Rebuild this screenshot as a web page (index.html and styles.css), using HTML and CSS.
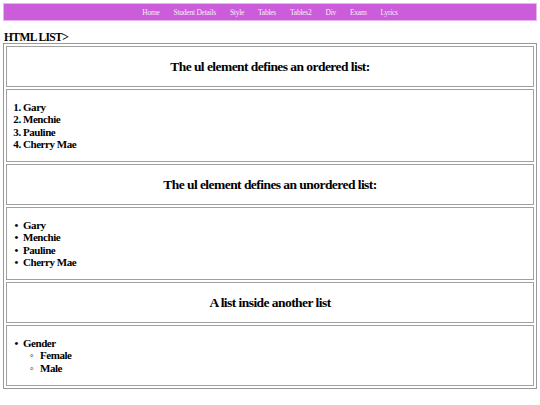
FILE: index.html
```html
<!DOCTYPE html>
<html>
<head>
<meta charset="utf-8">
<link rel="stylesheet" href="styles.css">
</head>
<body>
<nav class="topnav">
  <a href="#">Home</a>
  <a href="#">Student Details</a>
  <a href="#">Style</a>
  <a href="#">Tables</a>
  <a href="#">Tables2</a>
  <a href="#">Div</a>
  <a href="#">Exam</a>
  <a href="#">Lyrics</a>
</nav>
<h4 class="title">HTML LIST&gt;</h4>
<table class="grid">
  <tr><td class="head">The ul element defines an ordered list:</td></tr>
  <tr><td class="body">
    <ol class="list">
      <li>Gary</li>
      <li>Menchie</li>
      <li>Pauline</li>
      <li>Cherry Mae</li>
    </ol>
  </td></tr>
  <tr><td class="head">The ul element defines an unordered list:</td></tr>
  <tr><td class="body">
    <ul class="list bullets">
      <li>Gary</li>
      <li>Menchie</li>
      <li>Pauline</li>
      <li>Cherry Mae</li>
    </ul>
  </td></tr>
  <tr><td class="head">A list inside another list</td></tr>
  <tr><td class="body last">
    <ul class="list bullets">
      <li>Gender
        <ul class="sub">
          <li>Female</li>
          <li>Male</li>
        </ul>
      </li>
    </ul>
  </td></tr>
</table>
</body>
</html>
```
FILE: styles.css
```css
html, body {
  margin: 0;
  padding: 0;
  background: #fff;
}
body {
  padding: 3px;
  font-family: "Liberation Serif", "Times New Roman", serif;
  color: #000;
}
.topnav {
  background: #cb5ddb;
  border: 1px solid #e6b3ee;
  height: 16px;
  display: flex;
  justify-content: center;
  align-items: center;
  gap: 14px;
  font-size: 7.5px;
  letter-spacing: -0.25px;
}
.topnav a {
  color: #f6ecf8;
  text-decoration: none;
}
.title {
  margin: 10px 0 0 1px;
  font-size: 11.5px;
  line-height: 12px;
  letter-spacing: -0.6px;
  font-weight: bold;
}
.grid {
  width: 100%;
  border: 1px solid #999;
  border-spacing: 2px;
}
.grid td {
  border: 1px solid #a0a0a0;
  padding: 0;
}
.head {
  height: 39px;
  text-align: center;
  font-size: 13.5px;
  letter-spacing: -0.55px;
  font-weight: bold;
}
.body {
  height: 71px;
  font-size: 11px;
  letter-spacing: -0.45px;
  font-weight: bold;
  vertical-align: middle;
}
.last {
  height: 59px;
}
.list {
  margin: 0;
  padding-left: 16px;
  line-height: 12.4px;
}
.bullets {
  list-style-type: "\2022\2002";
}
.sub {
  margin: 0;
  padding-left: 17px;
  list-style-type: "\25E6\2002\2009";
}
```
